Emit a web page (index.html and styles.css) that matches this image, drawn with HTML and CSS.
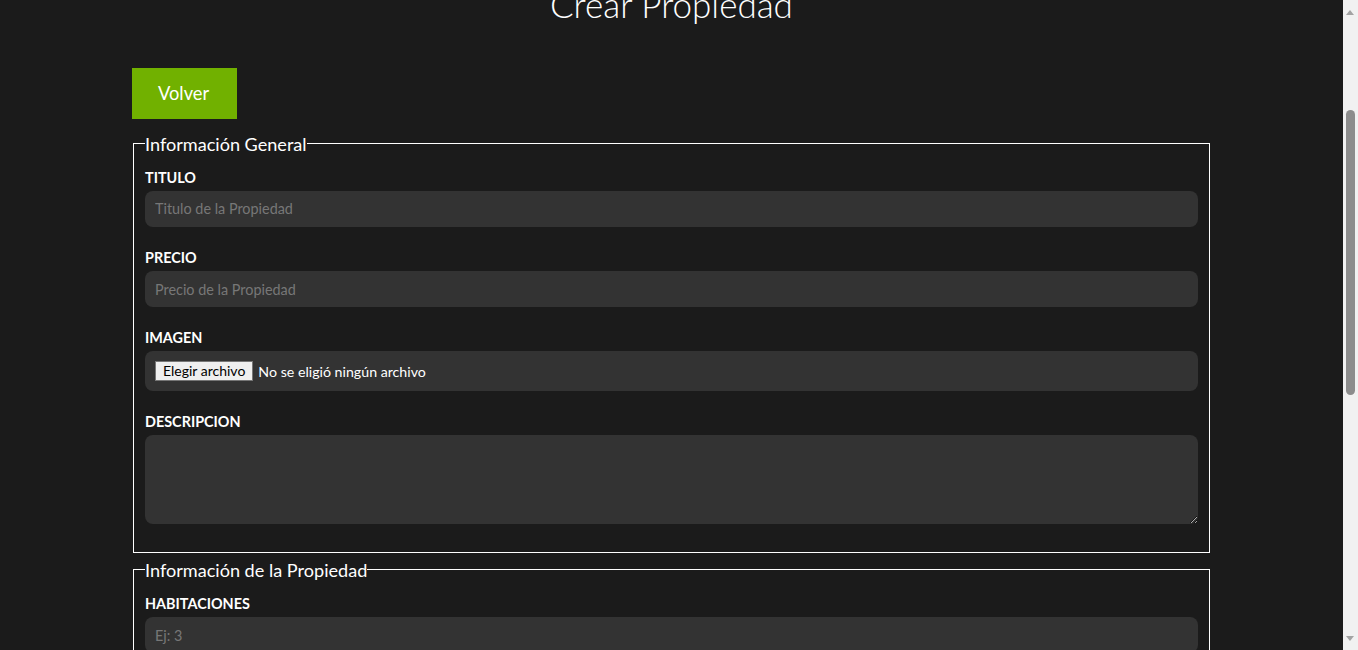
FILE: index.html
```html
<!DOCTYPE html>
<html lang="es">
<head>
<meta charset="utf-8">
<title>Crear Propiedad</title>
<link rel="stylesheet" href="styles.css">
</head>
<body>
<main class="container">
  <h1 class="title">Crear Propiedad</h1>
  <a href="#" class="btn btn-green">Volver</a>

  <form class="form">
    <fieldset class="group">
      <legend class="group-legend">Información General</legend>
      <div class="field">
        <label class="field-label" for="titulo">Titulo</label>
        <input class="field-input" type="text" id="titulo" placeholder="Titulo de la Propiedad">
      </div>
      <div class="field">
        <label class="field-label" for="precio">Precio</label>
        <input class="field-input" type="text" id="precio" placeholder="Precio de la Propiedad">
      </div>
      <div class="field">
        <label class="field-label" for="imagen">Imagen</label>
        <div class="file-box" id="imagen">
          <button type="button" class="file-btn">Elegir archivo</button>
          <span class="file-text">No se eligió ningún archivo</span>
        </div>
      </div>
      <div class="field">
        <label class="field-label" for="descripcion">Descripcion</label>
        <textarea class="field-input field-area" id="descripcion"></textarea>
      </div>
    </fieldset>

    <fieldset class="group">
      <legend class="group-legend">Información de la Propiedad</legend>
      <div class="field">
        <label class="field-label" for="habitaciones">Habitaciones</label>
        <input class="field-input" type="number" id="habitaciones" placeholder="Ej: 3">
      </div>
      <div class="field">
        <label class="field-label" for="wc">Baños</label>
        <input class="field-input" type="number" id="wc" placeholder="Ej: 3">
      </div>
      <div class="field">
        <label class="field-label" for="estacionamiento">Estacionamiento</label>
        <input class="field-input" type="number" id="estacionamiento" placeholder="Ej: 3">
      </div>
    </fieldset>

    <fieldset class="group">
      <legend class="group-legend">Vendedor</legend>
      <div class="field">
        <label class="field-label" for="vendedor">Vendedor</label>
        <input class="field-input" type="text" id="vendedor" placeholder="Nombre del Vendedor">
      </div>
    </fieldset>

    <button type="button" class="btn btn-green btn-submit">Crear Propiedad</button>
  </form>
</main>
<div class="scrollbar" aria-hidden="true">
  <span class="sb-arrow sb-up"></span>
  <span class="sb-thumb"></span>
  <span class="sb-arrow sb-down"></span>
</div>
<script src="scroll.js"></script>
</body>
</html>
```

FILE: styles.css
```css
html {
  background: #1b1b1b;
}
body {
  margin: 0 15px 0 0;
  background: #1b1b1b;
  color: #ffffff;
  font-family: Lato, "Open Sans", sans-serif;
}
.container {
  width: 1077px;
  margin: 0 auto;
  padding: 196px 0 160px;
}
.title {
  margin: 0 0 43px;
  font-size: 35px;
  line-height: 41px;
  font-weight: 300;
  text-align: center;
}
.btn {
  display: inline-block;
  margin-left: -1px;
  padding: 15px 28px 15px 26px;
  font-family: Lato, sans-serif;
  font-size: 18.3px;
  line-height: 21px;
  color: #ffffff;
  text-decoration: none;
  border: none;
  cursor: pointer;
}
.btn-green {
  background: #71b100;
}
.btn-submit {
  margin-top: 13px;
}
.form {
  margin-top: 13.5px;
}
.group {
  margin: 0 0 5.5px;
  padding: 14.4px 11px 6px;
  border: 1px solid #ffffff;
  min-width: 0;
}
.group-legend {
  padding: 0;
  font-size: 18.1px;
  line-height: 22px;
}
.field {
  margin-bottom: 22px;
}
.field-label {
  display: block;
  margin-bottom: 5.1px;
  font-size: 14.4px;
  line-height: 17px;
  font-weight: 700;
  text-transform: uppercase;
}
.field-input {
  display: block;
  box-sizing: border-box;
  width: 100%;
  height: 36px;
  padding: 0 10px;
  border: none;
  border-radius: 8px;
  background: #333333;
  color: #ffffff;
  font-family: Lato, sans-serif;
  font-size: 14.4px;
  outline: none;
}
.field-input::placeholder {
  color: #777777;
}
.field-area {
  height: 89px;
  padding: 10px;
  resize: vertical;
}
.file-box {
  display: flex;
  align-items: center;
  gap: 5px;
  box-sizing: border-box;
  height: 40px;
  padding: 0 10px;
  border-radius: 8px;
  background: #333333;
}
.file-btn {
  padding: 1px 7px;
  height: 20px;
  border: 1px solid #767676;
  border-radius: 0;
  background: #efefef;
  color: #000000;
  font-family: Lato, sans-serif;
  font-size: 14px;
  line-height: 16px;
}
.file-text {
  font-size: 14.2px;
  color: #ffffff;
}

/* decorative classic scrollbar, overlaid on the right edge */
.scrollbar {
  position: fixed;
  top: 0;
  right: 0;
  width: 15px;
  height: 100vh;
  background: #f1f1f1;
}
.sb-arrow {
  position: absolute;
  left: 3px;
  width: 0;
  height: 0;
  border-left: 4.5px solid transparent;
  border-right: 4.5px solid transparent;
}
.sb-up {
  top: 10px;
  border-bottom: 5px solid #a3a3a3;
}
.sb-down {
  bottom: 9px;
  border-top: 5px solid #a3a3a3;
}
.sb-thumb {
  position: absolute;
  top: 110px;
  left: 3px;
  width: 9px;
  height: 285px;
  border-radius: 5px;
  background: #8c8c8c;
}
```

FILE: scroll.js
```js
window.scrollTo(0, 212);
window.addEventListener('load', function () {
  window.scrollTo(0, 212);
});
```
